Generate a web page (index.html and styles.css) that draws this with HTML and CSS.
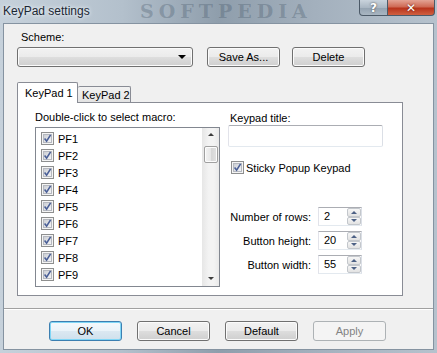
FILE: index.html
```html
<!DOCTYPE html>
<html lang="en">
<head>
  <meta charset="UTF-8" />
  <title>KeyPad settings</title>
  <link rel="stylesheet" href="styles.css">
</head>
<body>
  <svg width="0" height="0" class="defs">
    <defs>
      <linearGradient id="boxfill" x1="0" y1="0" x2="1" y2="1">
        <stop offset="0" stop-color="#c9ccd2"/>
        <stop offset="1" stop-color="#f7f7f8"/>
      </linearGradient>
      <symbol id="check" viewBox="0 0 13 13">
        <rect x="0.5" y="0.5" width="12" height="12" fill="#f4f4f4" stroke="#8e8f8f"/>
        <rect x="2.5" y="2.5" width="8" height="8" fill="url(#boxfill)" stroke="#b5b8bf"/>
        <path d="M3.6 6.6 L5.6 9.2 L9.6 2.8" fill="none" stroke="#4a5f97" stroke-width="1.6"/>
      </symbol>
    </defs>
  </svg>

  <div class="window">
    <div class="titlebar">
      <span class="title">KeyPad settings</span>
      <span class="watermark">SOFTPEDIA</span>
      <div class="caption">
        <span class="cap-btn help">?</span>
        <span class="cap-btn close">&#x2715;</span>
      </div>
    </div>

    <div class="client">
      <div class="scheme">
        <div class="label">Scheme:</div>
        <div class="scheme-row">
          <div class="btn combo"><span class="drop"></span></div>
          <button class="btn">Save As...</button>
          <button class="btn">Delete</button>
        </div>
      </div>

      <div class="tabs">
        <div class="tabstrip">
          <div class="tab active">KeyPad 1</div>
          <div class="tab">KeyPad 2</div>
        </div>
        <div class="tabpanel">
          <div class="macros">
            <div class="label">Double-click to select macro:</div>
            <div class="listbox">
              <ul class="items">
                <li><svg class="cbx"><use href="#check"/></svg>PF1</li>
                <li><svg class="cbx"><use href="#check"/></svg>PF2</li>
                <li><svg class="cbx"><use href="#check"/></svg>PF3</li>
                <li><svg class="cbx"><use href="#check"/></svg>PF4</li>
                <li><svg class="cbx"><use href="#check"/></svg>PF5</li>
                <li><svg class="cbx"><use href="#check"/></svg>PF6</li>
                <li><svg class="cbx"><use href="#check"/></svg>PF7</li>
                <li><svg class="cbx"><use href="#check"/></svg>PF8</li>
                <li><svg class="cbx"><use href="#check"/></svg>PF9</li>
              </ul>
              <div class="scrollbar">
                <span class="arrow up"></span>
                <span class="thumb"></span>
                <span class="arrow down"></span>
              </div>
            </div>
          </div>

          <div class="options">
            <div class="label">Keypad title:</div>
            <div class="textbox"></div>
            <div class="sticky"><svg class="cbx"><use href="#check"/></svg>Sticky Popup Keypad</div>
            <div class="spins">
              <span class="spin-label">Number of rows:</span>
              <div class="spinner"><span class="val">2</span><span class="spin-btns"><span class="sb up"></span><span class="sb down"></span></span></div>
              <span class="spin-label">Button height:</span>
              <div class="spinner"><span class="val">20</span><span class="spin-btns"><span class="sb up"></span><span class="sb down"></span></span></div>
              <span class="spin-label">Button width:</span>
              <div class="spinner"><span class="val">55</span><span class="spin-btns"><span class="sb up"></span><span class="sb down"></span></span></div>
            </div>
          </div>
        </div>
      </div>

      <div class="separator"></div>

      <div class="footer">
        <button class="btn default">OK</button>
        <button class="btn">Cancel</button>
        <button class="btn">Default</button>
        <button class="btn" disabled>Apply</button>
      </div>
    </div>
  </div>
</body>
</html>
```

FILE: styles.css
```css
body { margin: 0; width: 437px; height: 353px; overflow: hidden; font: 11px "Liberation Sans", Arial, sans-serif; color: #000; }
.defs { position: absolute; }

.window { height: 353px; display: flex; flex-direction: column; background: linear-gradient(90deg, #c6d1db 0%, #b3c0cc 28%, #8f9eac 50%, #a3b0bd 72%, #b6c2cd 100%); }

/* title bar */
.titlebar { height: 23px; display: flex; position: relative; }
.title { padding: 4px 0 0 3px; font-size: 12px; color: #1b2733; text-shadow: 0 0 5px #e8eef4, 0 0 3px #e8eef4; }
.watermark { position: absolute; left: 140px; top: 1px; font: bold 19px/21px "DejaVu Serif", serif; letter-spacing: 5px; color: rgba(60, 78, 96, 0.3); }
.caption { margin-left: auto; margin-right: 2px; display: flex; height: 16px; }
.cap-btn { display: flex; align-items: center; justify-content: center; height: 16px; box-sizing: border-box; border: 1px solid #4c5a68; border-top: none; color: #fff; font: bold 12px "DejaVu Sans", sans-serif; }
.help { width: 29px; border-radius: 0 0 0 4px; background: linear-gradient(#c9d3dc, #aab7c3 50%, #93a2b0 51%, #a9b6c2); text-shadow: 0 0 2px #333; }
.close { width: 47px; border-left: none; border-radius: 0 0 4px 0; background: linear-gradient(#e3a394, #cf6a55 45%, #b8341c 55%, #d06040); text-shadow: 0 0 2px #5a1000; }

/* client area */
.client { margin: 0 3px; height: 325px; border: 1px solid #8593a1; background: #f0f0f0; }
.label { line-height: 14px; }

.btn { box-sizing: border-box; width: 73px; height: 20px; padding: 0; border: 1px solid #707070; border-radius: 3px; background: linear-gradient(#f2f2f2 0%, #ebebeb 48%, #dddddd 52%, #cfcfcf 100%); box-shadow: inset 0 0 0 1px #fbfbfb; font: inherit; color: #000; }
.btn.default { border-color: #3c7fb1; box-shadow: inset 0 0 0 1px #7fd6f6; background: linear-gradient(#f4f9fc 0%, #eaf3f9 48%, #dbe8f1 52%, #cfe0ec 100%); }
.btn:disabled { border-color: #adb2b5; background: #f4f4f4; box-shadow: none; color: #838383; }

.scheme { padding: 6px 0 0 13px; }
.scheme > .label { margin-left: 4px; }
.scheme-row { display: flex; margin-top: 3px; }
.scheme-row .btn + .btn { margin-left: 12px; }
.btn.combo { width: 176px; margin-right: 2px; position: relative; }
.drop { position: absolute; right: 6px; top: 7px; border-left: 4px solid transparent; border-right: 4px solid transparent; border-top: 4px solid #000; }

/* tabs */
.tabs { margin: 15px 0 0 13px; }
.tabstrip { display: flex; align-items: flex-end; height: 20px; }
.tab { box-sizing: border-box; border: 1px solid #898c95; border-bottom: none; border-radius: 2px 2px 0 0; }
.tab.active { width: 61px; height: 21px; margin-bottom: -1px; position: relative; background: #fff; padding: 4px 0 0 7px; }
.tab:not(.active) { width: 53px; height: 16px; border-left: none; background: linear-gradient(#f2f2f2, #e3e3e3); padding: 2px 0 0 4px; }

.tabpanel { box-sizing: border-box; width: 386px; height: 194px; border: 1px solid #898c95; background: #fff; display: flex; padding: 7px 0 0 17px; }

.macros { width: 185px; }
.listbox { box-sizing: border-box; height: 160px; margin-top: 3px; border: 1px solid #828790; display: flex; }
.items { list-style: none; margin: 0; padding: 2px 0 0 5px; flex: 1; }
.items li { height: 17px; display: flex; align-items: center; gap: 4px; }
.cbx { width: 13px; height: 13px; flex: none; }

.scrollbar { width: 17px; display: flex; flex-direction: column; align-items: center; background: linear-gradient(90deg, #e6e6e6, #f3f3f3 40%, #f3f3f3 70%, #e9e9e9); }
.arrow { border-left: 3px solid transparent; border-right: 3px solid transparent; margin: 5px 0; }
.arrow.up { border-bottom: 3px solid #3d3d3d; }
.arrow.down { border-top: 3px solid #3d3d3d; margin-top: auto; margin-bottom: 6px; }
.thumb { box-sizing: border-box; width: 14px; height: 17px; margin: 5px 0 0 1px; border: 1px solid #a0a0a0; border-radius: 2px; background: linear-gradient(90deg, #f3f3f3, #e6e6e6 50%, #d6d6d6 51%, #e2e2e2); box-shadow: inset 0 0 0 1px #fcfcfc; }

.options { margin-left: 8px; padding-top: 1px; }
.options > .label { margin-left: 2px; }
.textbox { box-sizing: border-box; width: 155px; height: 22px; border: 1px solid; border-color: #abadb3 #dbdfe6 #e3e9ef #e2e3ea; border-radius: 2px; }
.sticky { display: flex; align-items: center; gap: 2px; margin: 14px 0 0 3px; height: 13px; }

.spins { display: grid; grid-template-columns: 83px 44px; column-gap: 7px; row-gap: 5px; margin-top: 33px; align-items: center; }
.spin-label { text-align: right; }
.spinner { box-sizing: border-box; height: 19px; display: flex; border: 1px solid; border-color: #abadb3 #dbdfe6 #e3e9ef #e2e3ea; }
.val { flex: 1; padding: 2px 0 0 5px; }
.spin-btns { width: 14px; display: flex; flex-direction: column; }
.sb { flex: 1; box-sizing: border-box; border: 1px solid #c3c7cc; border-radius: 2px; background: linear-gradient(#f6f6f6, #e2e2e2); display: flex; align-items: center; justify-content: center; }
.sb::after { content: ""; border-left: 3px solid transparent; border-right: 3px solid transparent; }
.sb.up::after { border-bottom: 3px solid #4d6185; }
.sb.down::after { border-top: 3px solid #4d6185; }

.separator { margin-top: 12px; border-top: 1px solid #a0a0a0; border-bottom: 1px solid #fff; }

.footer { display: flex; gap: 15px; padding-left: 45px; margin-top: 11px; }
```
